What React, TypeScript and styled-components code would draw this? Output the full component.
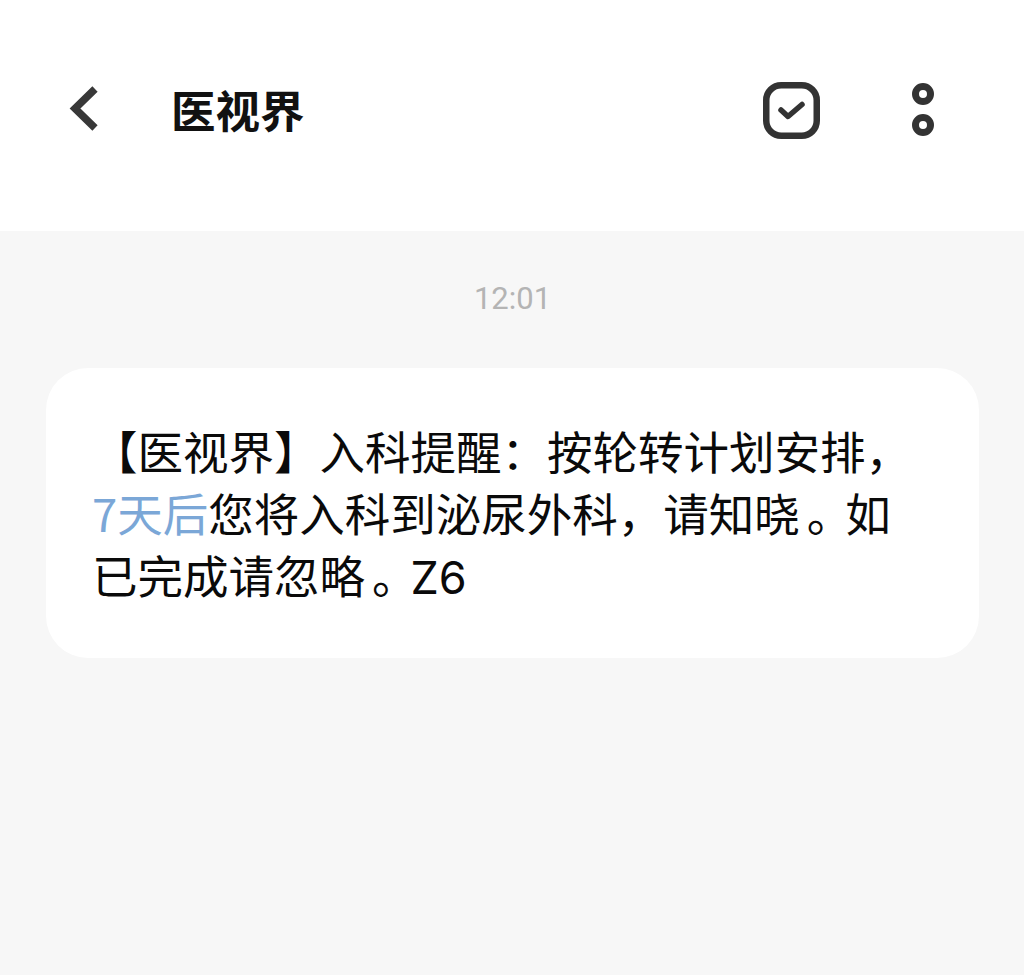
import React from 'react';
import styled, { createGlobalStyle } from 'styled-components';

const GlobalStyle = createGlobalStyle`
  html, body {
    margin: 0;
    padding: 0;
    background: #f7f7f7;
  }
`;

const Screen = styled.div`
  width: 1024px;
  height: 975px;
  overflow: hidden;
  background: #f7f7f7;
  font-family: "Noto Sans CJK SC", "Liberation Sans", sans-serif;
  color: #000;
`;

const Header = styled.header`
  height: 231px;
  box-sizing: border-box;
  padding: 0 90px 14px 68px;
  background: #fff;
  display: flex;
  align-items: center;
`;

const BackButton = styled.button`
  width: 32px;
  height: 46px;
  padding: 0;
  border: none;
  background: none;
  display: flex;
`;

const Title = styled.h1`
  margin: 0 0 0 71px;
  flex: 1;
  font-size: 44.5px;
  line-height: 60px;
  font-weight: 700;
  color: #111;
`;

const Actions = styled.div`
  display: flex;
  align-items: center;
  gap: 92px;
  padding-top: 3px;
`;

const IconSlot = styled.div<{ $w: number; $h: number }>`
  width: ${p => p.$w}px;
  height: ${p => p.$h}px;
  display: flex;
`;

const Thread = styled.main`
  padding: 46px 45px 0 46px;
  display: flex;
  flex-direction: column;
`;

const Time = styled.div`
  text-align: center;
  font-family: "Roboto", "Liberation Sans", sans-serif;
  font-size: 31px;
  line-height: 44px;
  color: #b4b4b4;
`;

const Bubble = styled.div`
  margin-top: 47px;
  height: 290px;
  box-sizing: border-box;
  padding: 51px 0 0 46px;
  background: #fff;
  border-radius: 42px;
`;

const Line = styled.div`
  font-size: 45.5px;
  line-height: 62px;
  white-space: nowrap;
  color: #0a0a0a;
`;

const Highlight = styled.span`
  color: #7ba7d7;
`;

// half-width stop, pushed towards the middle of its cell like the phone font does
const Stop = styled.span`
  font-feature-settings: "halt";
  margin-left: 7px;
  margin-right: 15.75px;
`;

const Latin = styled.span`
  font-family: "Inter", "Liberation Sans", sans-serif;
  font-size: 45px;
`;

export default function App() {
  return (
    <Screen>
      <GlobalStyle />
      <Header>
        <BackButton aria-label="back">
          <svg width="32" height="46" viewBox="0 0 32 46" fill="none">
            <path d="M27 3 L7 22.5 L27 42" stroke="#383838" strokeWidth="7.5" />
          </svg>
        </BackButton>
        <Title>医视界</Title>
        <Actions>
          <IconSlot $w={57} $h={57}>
            <svg width="57" height="57" viewBox="0 0 57 57" fill="none">
              <rect x="3.25" y="3.25" width="50.5" height="50.5" rx="15" stroke="#333" strokeWidth="6.5" />
              <path d="M18 28 L25 34.5 L39 22.5" stroke="#333" strokeWidth="5.5" strokeLinecap="round" strokeLinejoin="round" />
            </svg>
          </IconSlot>
          <IconSlot $w={22} $h={54}>
            <svg width="22" height="54" viewBox="0 0 22 54" fill="none">
              <circle cx="11" cy="11" r="7.5" stroke="#333" strokeWidth="7" />
              <circle cx="11" cy="42" r="7.5" stroke="#333" strokeWidth="7" />
            </svg>
          </IconSlot>
        </Actions>
      </Header>
      <Thread>
        <Time>12:01</Time>
        <Bubble>
          <Line>【医视界】入科提醒：按轮转计划安排，</Line>
          <Line><Highlight>7天后</Highlight>您将入科到泌尿外科，请知晓<Stop>。</Stop>如</Line>
          <Line>已完成请忽略<Stop>。</Stop><Latin>Z6</Latin></Line>
        </Bubble>
      </Thread>
    </Screen>
  );
}
